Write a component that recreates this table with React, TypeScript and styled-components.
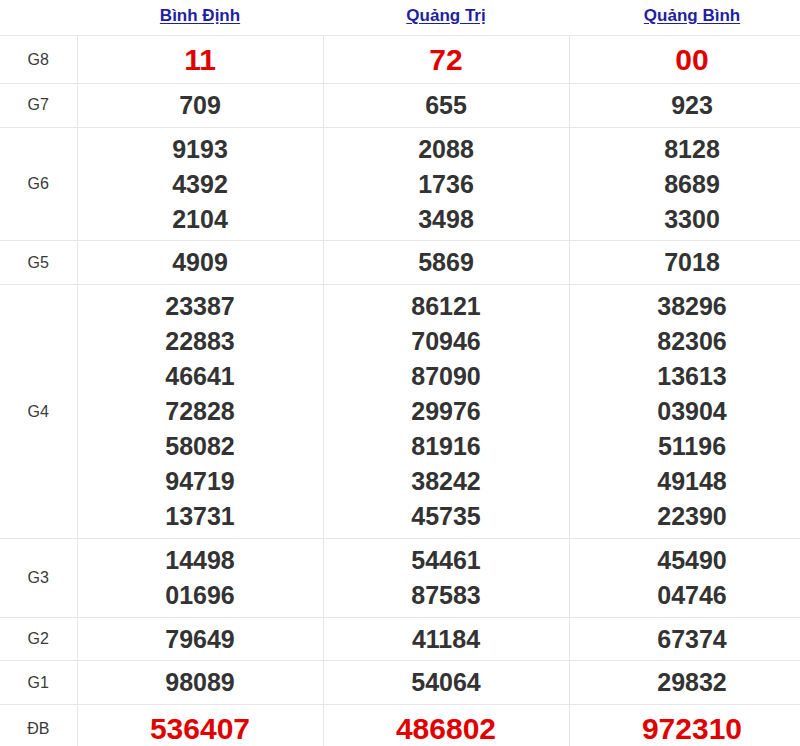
import React from "react";
import styled, { createGlobalStyle } from "styled-components";

const Global = createGlobalStyle`
  html, body { margin: 0; padding: 0; background: #fff; overflow: hidden; }
  body { font-family: "Liberation Sans", Arial, sans-serif; }
`;

const Table = styled.table`
  border-collapse: collapse;
  table-layout: fixed;
  width: 815px;
  font-family: "Liberation Sans", Arial, sans-serif;
`;

const Col = styled.col<{ $w: number }>`
  width: ${(p) => p.$w}px;
`;

const HeadCell = styled.th`
  height: 32px;
  padding: 0 0 3px;
  text-align: center;
  vertical-align: middle;
  border-bottom: 1px solid #e6e6e6;
  font-weight: bold;
`;

const HeadLink = styled.a`
  font-size: 17px;
  color: #1f1fa3;
  text-decoration: underline;
  text-underline-offset: 2px;
`;

const Label = styled.td`
  padding: 4px 0 3.75px;
  text-align: center;
  vertical-align: middle;
  border: 1px solid #e6e6e6;
  border-left: none;
  font-size: 16px;
  color: #3a3a3a;
`;

const Cell = styled.td`
  padding: 4px 0 3.75px;
  text-align: center;
  vertical-align: middle;
  border: 1px solid #e6e6e6;
`;

const Num = styled.div<{ $big?: boolean }>`
  font-weight: bold;
  font-size: ${(p) => (p.$big ? "30px" : "25px")};
  line-height: ${(p) => (p.$big ? "39px" : "35px")};
  color: ${(p) => (p.$big ? "#e00000" : "#333")};
`;

const provinces = ["Bình Định", "Quảng Trị", "Quảng Bình"];

type Row = { label: string; big?: boolean; values: string[][] };

const rows: Row[] = [
  { label: "G8", big: true, values: [["11"], ["72"], ["00"]] },
  { label: "G7", values: [["709"], ["655"], ["923"]] },
  {
    label: "G6",
    values: [
      ["9193", "4392", "2104"],
      ["2088", "1736", "3498"],
      ["8128", "8689", "3300"],
    ],
  },
  { label: "G5", values: [["4909"], ["5869"], ["7018"]] },
  {
    label: "G4",
    values: [
      ["23387", "22883", "46641", "72828", "58082", "94719", "13731"],
      ["86121", "70946", "87090", "29976", "81916", "38242", "45735"],
      ["38296", "82306", "13613", "03904", "51196", "49148", "22390"],
    ],
  },
  {
    label: "G3",
    values: [
      ["14498", "01696"],
      ["54461", "87583"],
      ["45490", "04746"],
    ],
  },
  { label: "G2", values: [["79649"], ["41184"], ["67374"]] },
  { label: "G1", values: [["98089"], ["54064"], ["29832"]] },
  { label: "ĐB", big: true, values: [["536407"], ["486802"], ["972310"]] },
];

export default function App() {
  return (
    <>
      <Global />
      <Table>
        <colgroup>
          <Col $w={77} />
          <Col $w={246} />
          <Col $w={246} />
          <Col $w={246} />
        </colgroup>
        <thead>
          <tr>
            <HeadCell />
            {provinces.map((p) => (
              <HeadCell key={p}>
                <HeadLink href="#">{p}</HeadLink>
              </HeadCell>
            ))}
          </tr>
        </thead>
        <tbody>
          {rows.map((r) => (
            <tr key={r.label}>
              <Label>{r.label}</Label>
              {r.values.map((col, i) => (
                <Cell key={i}>
                  {col.map((v, j) => (
                    <Num key={j} $big={r.big}>
                      {v}
                    </Num>
                  ))}
                </Cell>
              ))}
            </tr>
          ))}
        </tbody>
      </Table>
    </>
  );
}
